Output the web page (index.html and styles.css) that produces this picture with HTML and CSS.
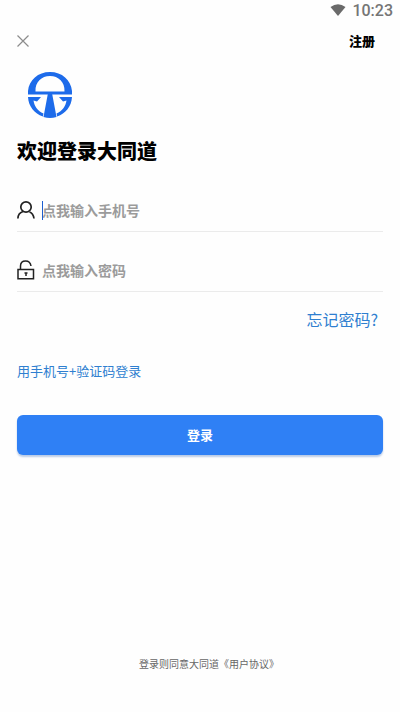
FILE: index.html
```html
<!DOCTYPE html>
<html lang="zh-CN">
<head>
<meta charset="utf-8">
<meta name="viewport" content="width=device-width, initial-scale=1">
<title>登录</title>
<link rel="stylesheet" href="styles.css">
</head>
<body>
<div class="status">
  <svg width="16" height="12" viewBox="0 0 16 12" aria-hidden="true"><path d="M0.5 3Q8-2.5 15.5 3L8 12Z" fill="#6a6a6a"/></svg>
  <span>10:23</span>
</div>
<header class="topbar">
  <button class="close" type="button" aria-label="关闭">
    <svg width="12" height="12" viewBox="0 0 12 12"><path d="M0.5 0.5L11.5 11.5M11.5 0.5L0.5 11.5" stroke="#8c8c8c" stroke-width="1.2"/></svg>
  </button>
  <a class="register" href="#">注册</a>
</header>
<main class="content">
  <svg class="logo" width="44" height="46" viewBox="0 0 44 46" aria-hidden="true">
    <path fill="#1d6bea" fill-rule="evenodd" d="M0 22.500V19C1 8 10 0 22 0S43 8 44 19V22.500ZM7.500 19.500H36.500C37 10 30.500 4 22 4S7 10 7.500 19.500Z"/>
    <path fill="#1d6bea" d="M0 25H13L9 29.500L5.500 28.500C6.500 34.500 9.500 39 15.500 41.500L14.800 44.500C6.500 41.500 0.500 34.500 0 25ZM44 25H31L35 29.500L38.500 28.500C37.500 34.500 34.500 39 28.500 41.500L29.200 44.500C37.500 41.500 43.500 34.500 44 25Z"/>
    <path fill="#1d6bea" d="M19.800 22H24.200L28.500 45Q22 47 15.500 45Z"/>
  </svg>
  <h1 class="title">欢迎登录大同道</h1>
  <form class="form">
    <div class="field active">
      <label for="phone" aria-label="手机号">
        <svg width="18" height="20" viewBox="0 0 18 20" fill="none" stroke="#222" stroke-width="1.700"><circle cx="9" cy="7" r="5.200"/><path d="M6 11.500C3 12.500 1 14.500 0.900 18.500M12.500 12C15.500 13 16.500 15 17 18.500"/></svg>
      </label>
      <input id="phone" type="tel" placeholder="点我输入手机号">
    </div>
    <div class="field">
      <label for="password" aria-label="密码">
        <svg width="18" height="20" viewBox="0 0 18 20" fill="none" stroke="#222" stroke-width="1.500"><path d="M1 9.500H16.500V18.700H1ZM3.500 9.500V6C3.500 2.700 5.700 0.900 8.600 0.900C11.500 0.900 13.500 2.500 14 6"/><path d="M9 12.500V16M7.500 13H10.500" stroke-width="1.500"/></svg>
      </label>
      <input id="password" type="password" placeholder="点我输入密码">
    </div>
    <a class="forgot" href="#">忘记密码?</a>
    <a class="code-login" href="#">用手机号+验证码登录</a>
    <button class="submit" type="submit">登录</button>
  </form>
</main>
<footer class="footer">登录则同意大同道<a href="#">《用户协议》</a></footer>
</body>
</html>
```
FILE: styles.css
```css
* {
  box-sizing: border-box;
}

body {
  margin: 0;
  min-height: 100vh;
  display: flex;
  flex-direction: column;
  background: #fefefe;
  color: #000;
  font-family: "Noto Sans CJK SC", sans-serif;
}

a {
  color: inherit;
  text-decoration: none;
}

svg {
  display: block;
}

.status {
  display: flex;
  justify-content: flex-end;
  align-items: center;
  gap: 6px;
  height: 22px;
  padding-right: 7px;
  color: #757575;
  font: 500 16px/22px Roboto, sans-serif;
}

.status svg {
  margin-bottom: 2px;
}

.topbar {
  display: flex;
  justify-content: space-between;
  align-items: center;
  height: 38px;
  padding: 0 25px 0 17px;
}

.close {
  padding: 0;
  border: 0;
  background: none;
}

.register {
  padding-bottom: 2px;
  font-size: 13px;
  font-weight: 900;
}

.content {
  flex: 1;
  padding: 12px 17px 0;
}

.logo {
  margin-left: 11px;
}

.title {
  margin: 18px 0 0;
  font-size: 20px;
  line-height: 30px;
  font-weight: 900;
}

.form {
  display: flex;
  flex-direction: column;
  padding-top: 24px;
}

.field {
  position: relative;
  display: flex;
  align-items: center;
  gap: 7px;
  height: 42px;
  padding-bottom: 2px;
  border-bottom: 1px solid #ebebeb;
}

.field + .field {
  margin-top: 18px;
}

.field input {
  flex: 1;
  min-width: 0;
  padding: 0;
  border: 0;
  outline: 0;
  background: none;
  font: 700 14px/20px "Noto Sans CJK SC", sans-serif;
}

.field input::placeholder {
  color: #9b9b9b;
  opacity: 1;
}

.active::before {
  content: "";
  position: absolute;
  left: 25px;
  top: 11px;
  width: 1px;
  height: 19px;
  background: #1d5fd0;
}

.forgot {
  align-self: flex-end;
  margin: 15px 5px 0 0;
  color: #2f7fd0;
  font-size: 16px;
  line-height: 24px;
}

.code-login {
  align-self: flex-start;
  margin-top: 30px;
  color: #2f7fd0;
  font-size: 13px;
  line-height: 20px;
}

.submit {
  height: 40px;
  margin-top: 34px;
  padding: 0;
  border: 0;
  border-radius: 6px;
  background: #2f80f5;
  box-shadow: 0 2px 2px #b9cbe6;
  color: #fff;
  font: 700 13px/20px "Noto Sans CJK SC", sans-serif;
}

.footer {
  padding: 0 0 40px 18px;
  color: #666;
  font-size: 10px;
  line-height: 16px;
  text-align: center;
}
```
